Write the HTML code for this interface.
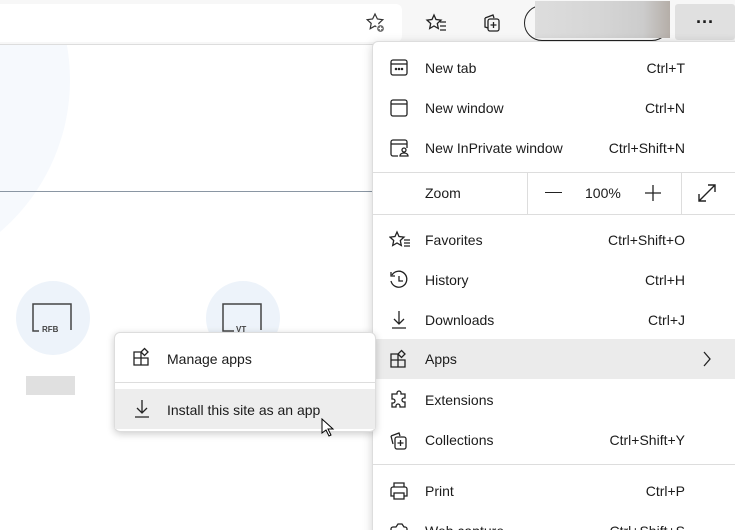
<!DOCTYPE html>
<html><head><meta charset="utf-8"><style>
*{margin:0;padding:0;box-sizing:border-box}
html,body{width:735px;height:530px;overflow:hidden}
body{background:#fff;font-family:"Segoe UI","Liberation Sans",sans-serif;font-size:14px;color:#1b1b1b;position:relative}
.abs{position:absolute}
.item{position:absolute;left:372px;width:363px;height:40px}
.item .t{position:absolute;left:53px;top:12px}
.item .k{position:absolute;right:50px;top:12px}
.item svg{position:absolute;left:17px;top:10px}
</style></head><body>
<div class="abs" style="left:-330px;top:-120px;width:400px;height:400px;border-radius:50%;background:#f6f9fd"></div>
<div class="abs" style="left:0;top:0;width:735px;height:45px;background:#f7f7f7;border-bottom:1px solid #ddd"></div>
<div class="abs" style="left:0;top:4px;width:402px;height:38px;background:#fff;border-radius:0 6px 6px 0"></div>
<svg class="abs" style="left:365px;top:12px" width="24" height="24" viewBox="0 0 24 24" fill="none" stroke="#333" stroke-width="1.2"><path d="M10 2l2.4 5 5.4.7-4 3.7 1 5.3L10 14l-4.8 2.7 1-5.3-4-3.7 5.4-.7z"/><circle cx="15.5" cy="16.5" r="4" fill="#666" stroke="#fff"/><path d="M15.5 14.5v4M13.5 16.5h4" stroke="#fff"/></svg>
<svg class="abs" style="left:425px;top:12px" width="24" height="24" viewBox="0 0 24 24" fill="none" stroke="#222" stroke-width="1.3"><path d="M9 3l2 4.5 5 .6-3.7 3.4 1 5L9 14l-4.3 2.5 1-5L2 8.1l5-.6z"/><path d="M15 10h6M15 14h6M15 18h6"/></svg>
<svg class="abs" style="left:480px;top:11px" width="24" height="24" viewBox="0 0 24 24" fill="none" stroke="#222" stroke-width="1.3"><path d="M5 7l8-3 1 3M5 7v9l3 1"/><rect x="8" y="8" width="11" height="12" rx="2"/><path d="M13.5 11v6M10.5 14h6"/></svg>
<div class="abs" style="left:524px;top:5px;width:146px;height:36px;border:1.5px solid #222;border-radius:18px"></div>
<div class="abs" style="left:535px;top:1px;width:135px;height:37px;background:linear-gradient(90deg,#ddd,#d5d5d5 50%,#ccc 80%,#b5aea8)"></div>
<div class="abs" style="left:675px;top:4px;width:60px;height:36px;background:#e0e0e0;border-radius:3px;text-align:center;font-size:18px;line-height:36px;font-weight:bold">···</div>
<div class="abs" style="left:0;top:191px;width:372px;height:1px;background:#8a96a3"></div>
<div class="abs" style="left:16px;top:281px;width:74px;height:74px;border-radius:50%;background:#edf3fa"></div>
<div class="abs" style="left:206px;top:281px;width:74px;height:74px;border-radius:50%;background:#edf3fa"></div>
<svg class="abs" style="left:32px;top:303px" width="42" height="30" fill="none" stroke="#444" stroke-width="1.5"><path d="M7 28H1V1h38v26"/><text x="10" y="29" font-family="Liberation Sans" font-size="8" font-weight="bold" fill="#444" stroke="none">RFB</text></svg>
<svg class="abs" style="left:222px;top:303px" width="42" height="30" fill="none" stroke="#444" stroke-width="1.5"><path d="M12 28H1V1h38v26"/><text x="14" y="29" font-family="Liberation Sans" font-size="8" font-weight="bold" fill="#444" stroke="none">VT</text></svg>
<div class="abs" style="left:26px;top:376px;width:49px;height:19px;background:#e0e0e0"></div>
<div class="abs" style="left:372px;top:41px;width:370px;height:500px;background:#fff;border:1px solid #ddd;border-radius:6px;box-shadow:0 2px 10px rgba(0,0,0,.18)"></div>
<div class="item" style="top:48px"><svg width="20" height="20" fill="none" stroke="#222" stroke-width="1.3"><rect x="2" y="2" width="16" height="15" rx="2"/><path d="M2 6h16"/><circle cx="7" cy="11" r=".6"/><circle cx="10" cy="11" r=".6"/><circle cx="13" cy="11" r=".6"/></svg><span class="t">New tab</span><span class="k">Ctrl+T</span></div>
<div class="item" style="top:88px"><svg width="20" height="20" fill="none" stroke="#222" stroke-width="1.3"><rect x="2" y="2" width="16" height="16" rx="2"/><path d="M2 6h16"/></svg><span class="t">New window</span><span class="k">Ctrl+N</span></div>
<div class="item" style="top:128px"><svg width="22" height="20" fill="none" stroke="#222" stroke-width="1.3"><path d="M9 18H4a2 2 0 01-2-2V4a2 2 0 012-2h12a2 2 0 012 2v6"/><path d="M2 6h16"/><circle cx="15" cy="12" r="2"/><path d="M11 18c0-2 2-3 4-3s4 1 4 3z"/></svg><span class="t">New InPrivate window</span><span class="k">Ctrl+Shift+N</span></div>
<div class="abs" style="left:372px;top:172px;width:363px;height:1px;background:#ddd"></div>
<div class="abs" style="left:425px;top:185px">Zoom</div>
<div class="abs" style="left:527px;top:172px;width:1px;height:42px;background:#ddd"></div>
<div class="abs" style="left:681px;top:172px;width:1px;height:42px;background:#ddd"></div>
<div class="abs" style="left:545px;top:192px;width:17px;height:1.3px;background:#222"></div>
<div class="abs" style="left:585px;top:185px">100%</div>
<svg class="abs" style="left:644px;top:184px" width="18" height="18" stroke="#222" stroke-width="1.3"><path d="M9 1v16M1 9h16"/></svg>
<svg class="abs" style="left:697px;top:183px" width="20" height="20" fill="none" stroke="#222" stroke-width="1.4"><path d="M2 18L18 2M11 2h7v7M2 11v7h7"/></svg>
<div class="abs" style="left:372px;top:214px;width:363px;height:1px;background:#ddd"></div>
<div class="item" style="top:220px"><svg width="22" height="20" fill="none" stroke="#222" stroke-width="1.3"><path d="M8 2l2 4.5 5 .6-3.7 3.4 1 5L8 13l-4.3 2.5 1-5L1 7.1l5-.6z"/><path d="M15 10h6M15 13h6M15 16h6"/></svg><span class="t">Favorites</span><span class="k">Ctrl+Shift+O</span></div>
<div class="item" style="top:260px"><svg width="20" height="20" fill="none" stroke="#222" stroke-width="1.3"><path d="M3 5a8 8 0 11-1 6"/><path d="M2 2v4h4M10 6v5h4"/></svg><span class="t">History</span><span class="k">Ctrl+H</span></div>
<div class="item" style="top:300px"><svg width="20" height="20" fill="none" stroke="#222" stroke-width="1.3"><path d="M10 1v13M5 9l5 5 5-5M3 18h14"/></svg><span class="t">Downloads</span><span class="k">Ctrl+J</span></div>
<div class="item" style="top:339px;background:#ebebeb"><svg width="20" height="20" fill="none" stroke="#222" stroke-width="1.3"><path d="M2 5h7v13H2zM2 11h14v7H9M12.5 1.5l3.5 3.5-3.5 3.5-3.5-3.5z"/></svg><span class="t">Apps</span><svg style="left:330px;top:12px" width="10" height="16" fill="none" stroke="#222" stroke-width="1.3"><path d="M2 1l6 7-6 7"/></svg></div>
<div class="item" style="top:380px"><svg width="20" height="20" fill="none" stroke="#222" stroke-width="1.3"><path d="M8 3a2 2 0 014 0v1h4v4h-1a2 2 0 000 4h1v5h-5v-1a2 2 0 00-4 0v1H3v-4h1a2 2 0 000-4H3V4h5z"/></svg><span class="t">Extensions</span></div>
<div class="item" style="top:420px"><svg width="22" height="20" fill="none" stroke="#222" stroke-width="1.3"><path d="M2 6l8-3 1 3M2 6l2 8"/><rect x="6" y="7" width="11" height="12" rx="2"/><path d="M11.5 10v6M8.5 13h6"/></svg><span class="t">Collections</span><span class="k">Ctrl+Shift+Y</span></div>
<div class="abs" style="left:372px;top:464px;width:363px;height:1px;background:#ddd"></div>
<div class="item" style="top:471px"><svg width="20" height="20" fill="none" stroke="#222" stroke-width="1.3"><path d="M5 6V2h10v4M5 15H2V8a2 2 0 012-2h12a2 2 0 012 2v7h-3"/><rect x="5" y="12" width="10" height="6"/></svg><span class="t">Print</span><span class="k">Ctrl+P</span></div>
<div class="item" style="top:511px"><svg width="20" height="20" fill="none" stroke="#222" stroke-width="1.3"><path d="M2 8a2 2 0 012-2h3l2-3h4l2 3h1a2 2 0 012 2v8H2z"/></svg><span class="t">Web capture</span><span class="k">Ctrl+Shift+S</span></div>
<div class="abs" style="left:114px;top:332px;width:262px;height:100px;background:#fff;border:1px solid #ddd;border-radius:6px;box-shadow:0 2px 8px rgba(0,0,0,.2)"></div>
<svg class="abs" style="left:132px;top:347px" width="20" height="20" fill="none" stroke="#222" stroke-width="1.3"><path d="M2 5h7v13H2zM2 11h14v7H9M12.5 1.5l3.5 3.5-3.5 3.5-3.5-3.5z"/></svg>
<div class="abs" style="left:167px;top:351px">Manage apps</div>
<div class="abs" style="left:114px;top:382px;width:262px;height:1px;background:#ddd"></div>
<div class="abs" style="left:115px;top:389px;width:260px;height:40px;background:#ededed"></div>
<svg class="abs" style="left:132px;top:399px" width="20" height="20" fill="none" stroke="#222" stroke-width="1.3"><path d="M10 1v13M5 9l5 5 5-5M3 18h14"/></svg>
<div class="abs" style="left:167px;top:402px">Install this site as an app</div>
<svg class="abs" style="left:321px;top:418px" width="14" height="20"><path d="M1 1v14l4-3 3 6 2-1-3-6h5z" fill="#fff" stroke="#000" stroke-width="1"/></svg>
</body></html>
